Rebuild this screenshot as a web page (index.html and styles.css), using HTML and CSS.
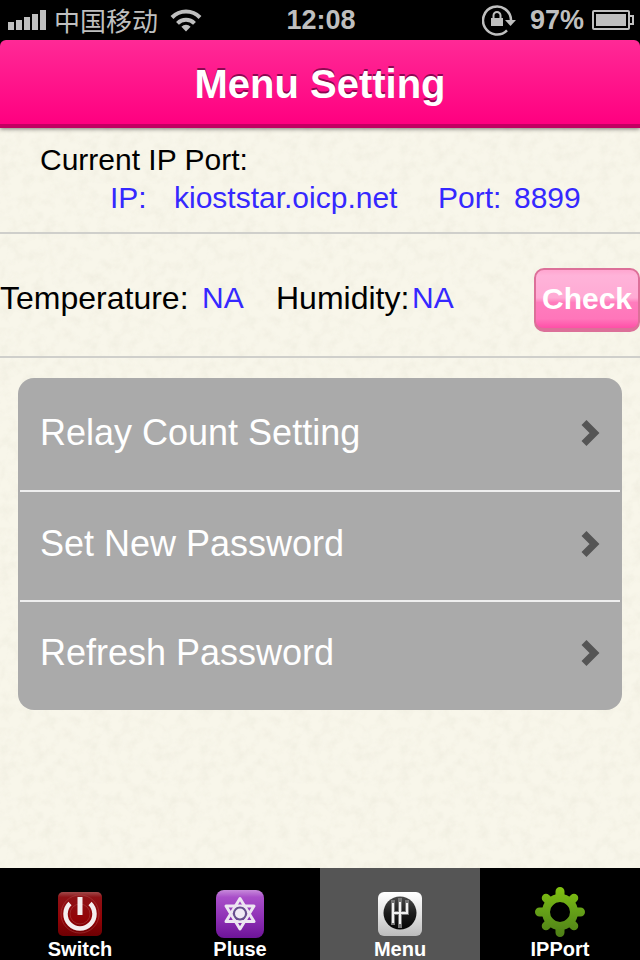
FILE: index.html
```html
<!DOCTYPE html>
<html lang="en">
<head>
  <meta charset="UTF-8" />
  <meta name="viewport" content="width=device-width, initial-scale=1.0" />
  <title>Menu Setting</title>
  <link rel="stylesheet" href="styles.css">
</head>
<body>
  <div class="status-bar">
    <div class="status-left">
      <svg class="signal" width="38" height="20" viewBox="0 0 38 20" fill="currentColor" aria-hidden="true">
        <path d="M0 12h6v8H0zM8 10h6v10H8zM16 7h6v13h-6zM24 4h6v16h-6zM32 0h6v20h-6z"/>
      </svg>
      <span class="carrier" lang="zh-CN">中国移动</span>
      <svg class="wifi" width="32" height="24" viewBox="0 0 32 24" aria-hidden="true">
        <g fill="none" stroke="currentColor" stroke-width="4">
          <path d="M2 9.500a19.500 19.500 0 0 1 28 0"/>
          <path d="M7.500 15.300a12 12 0 0 1 17 0"/>
        </g>
        <path d="M16 23.500l-4.600-4.800a6.500 6.500 0 0 1 9.200 0z" fill="currentColor"/>
      </svg>
    </div>
    <time class="clock">12:08</time>
    <div class="status-right">
      <svg class="lock" width="34" height="32" viewBox="0 0 34 32" aria-hidden="true">
        <path d="M25 26.300A14 14 0 1 1 29 16" fill="none" stroke="currentColor" stroke-width="2.500"/>
        <path d="M23 16h11l-5.500 6z" fill="currentColor"/>
        <rect x="9" y="14" width="12" height="8" fill="currentColor"/>
        <path d="M11.500 14v-2.500a3.500 3.500 0 0 1 7 0V14" fill="none" stroke="currentColor" stroke-width="2"/>
      </svg>
      <span>97%</span>
      <svg class="battery" width="42" height="20" viewBox="0 0 42 20" aria-hidden="true">
        <rect x="1" y="1" width="36" height="18" rx="1" fill="none" stroke="currentColor" stroke-width="2"/>
        <path d="M38 6h3v8h-3" fill="none" stroke="currentColor" stroke-width="2"/>
        <rect x="4" y="4" width="30" height="12" fill="currentColor"/>
      </svg>
    </div>
  </div>

  <header class="title-bar">
    <h1>Menu Setting</h1>
  </header>

  <main>
    <section class="address">
      <h2>Current IP Port:</h2>
      <div class="address-row">
        <span>IP:</span>
        <span>kioststar.oicp.net</span>
        <span>Port:</span>
        <span>8899</span>
      </div>
    </section>

    <section class="sensors">
      <span>Temperature:</span>
      <span class="value">NA</span>
      <span>Humidity:</span>
      <span class="value">NA</span>
      <button class="check-btn" type="button">Check</button>
    </section>

    <ul class="menu">
      <li>
        <a href="#relay">Relay Count Setting
          <svg width="19" height="28" viewBox="0 0 19 28" aria-hidden="true"><path d="M3 3.500L13.500 14 3 24.500" /></svg>
        </a>
      </li>
      <li>
        <a href="#new-password">Set New Password
          <svg width="19" height="28" viewBox="0 0 19 28" aria-hidden="true"><path d="M3 3.500L13.500 14 3 24.500" /></svg>
        </a>
      </li>
      <li>
        <a href="#refresh">Refresh Password
          <svg width="19" height="28" viewBox="0 0 19 28" aria-hidden="true"><path d="M3 3.500L13.500 14 3 24.500" /></svg>
        </a>
      </li>
    </ul>
  </main>

  <nav class="tabs">
    <a href="#switch">
      <svg width="48" height="48" viewBox="0 0 48 48" aria-hidden="true">
        <defs>
          <linearGradient id="red" x2="0" y2="1">
            <stop offset="0" stop-color="#a04a4a"/>
            <stop offset=".12" stop-color="#8e1216"/>
            <stop offset=".6" stop-color="#930306"/>
            <stop offset="1" stop-color="#6e0003"/>
          </linearGradient>
        </defs>
        <rect x="2" y="2" width="44" height="44" rx="5" fill="url(#red)"/>
        <circle cx="24" cy="24" r="19" fill="none" stroke="#b04a4a" stroke-opacity=".5"/>
        <circle cx="24" cy="24" r="10" fill="none" stroke="#b04a4a" stroke-opacity=".5"/>
        <path d="M14 13.500a14.500 14.500 0 1 0 20 0" fill="none" stroke="#f4eeee" stroke-width="4.500"/>
        <path d="M24 7v18" stroke="#f4eeee" stroke-width="5"/>
      </svg>
      Switch
    </a>
    <a href="#pluse">
      <svg width="48" height="48" viewBox="0 0 48 48" aria-hidden="true">
        <defs>
          <linearGradient id="purple" x2="0" y2="1">
            <stop offset="0" stop-color="#c78adb"/>
            <stop offset=".15" stop-color="#a94fc9"/>
            <stop offset=".6" stop-color="#8d2fb4"/>
            <stop offset="1" stop-color="#6e1498"/>
          </linearGradient>
        </defs>
        <rect x="0" y="0" width="48" height="48" rx="8" fill="url(#purple)"/>
        <g fill="none" stroke="#ece6f1" stroke-width="3" stroke-linejoin="round">
          <path d="M24 8.500L38 31.500H10z"/>
          <path d="M24 39L10 16h28z"/>
        </g>
        <circle cx="24" cy="23.500" r="6" fill="#f0eaf5" stroke="#66518c" stroke-width="2"/>
      </svg>
      Pluse
    </a>
    <a href="#menu" class="active" aria-current="page">
      <svg width="48" height="48" viewBox="0 0 48 48" aria-hidden="true">
        <defs>
          <linearGradient id="silver" x2="0" y2="1">
            <stop offset="0" stop-color="#fff"/>
            <stop offset=".5" stop-color="#e3e3e3"/>
            <stop offset="1" stop-color="#bcbcbc"/>
          </linearGradient>
          <linearGradient id="knob" x2="0" y2="1">
            <stop offset="0" stop-color="#4a4a4a"/>
            <stop offset=".5" stop-color="#1c1c1c"/>
            <stop offset="1" stop-color="#050505"/>
          </linearGradient>
        </defs>
        <rect x="2" y="2" width="44" height="44" rx="6" fill="url(#silver)"/>
        <circle cx="24" cy="23" r="16.500" fill="url(#knob)"/>
        <path d="M17 10v25M24 8v30M31 10v15M17 23h14" fill="none" stroke="#777" stroke-width="4"/>
        <path d="M17 13v20M24 12v22M31 13v10M16 23h16" fill="none" stroke="#f2f2f2" stroke-width="2"/>
      </svg>
      Menu
    </a>
    <a href="#ipport">
      <svg width="52" height="52" viewBox="0 0 52 52" aria-hidden="true">
        <defs>
          <linearGradient id="green" gradientUnits="userSpaceOnUse" x1="0" y1="0" x2="0" y2="52">
            <stop offset="0" stop-color="#83c410"/>
            <stop offset=".5" stop-color="#649f18"/>
            <stop offset="1" stop-color="#4d7d17"/>
          </linearGradient>
        </defs>
        <circle cx="26" cy="26" r="14" fill="none" stroke="url(#green)" stroke-width="8"/>
        <g fill="none" stroke="url(#green)" stroke-width="9" stroke-linecap="round">
          <path d="M26.010 5.500L26 10M26.010 42L26 46.500M5.500 26.010L10 26M42 26.010L46.500 26"/>
          <path d="M12 12l4 4M40 12l-4 4M12 40l4-4M40 40l-4-4" stroke-width="8.500"/>
        </g>
      </svg>
      IPPort
    </a>
  </nav>
</body>
</html>
```
FILE: styles.css
```css
:root {
  --paper: #f8f6ea;
  --pink: #ff0080;
  --blue: #3528ff;
  --grey: #aaa;
  --status: #bfbfbf;
}

* {
  box-sizing: border-box;
}

body {
  margin: 0;
  min-height: 100vh;
  display: flex;
  flex-direction: column;
  background: #000;
  font-family: "Liberation Sans", Arial, sans-serif;
}

h1, h2, ul {
  margin: 0;
  padding: 0;
}

a {
  color: inherit;
  text-decoration: none;
}

/* status bar */
.status-bar {
  display: grid;
  grid-template-columns: 1fr auto 1fr;
  align-items: center;
  height: 40px;
  padding: 0 6px 0 8px;
  color: var(--status);
  font-size: 27px;
  font-weight: bold;
}

.status-left,
.status-right {
  display: flex;
  align-items: center;
}

.status-right {
  justify-content: flex-end;
  gap: 8px;
}

.carrier {
  margin: 0 12px 0 8px;
  font-family: "Noto Sans CJK SC", sans-serif;
  font-size: 26px;
  font-weight: 400;
  line-height: 38px;
}

.status-right .lock {
  margin-right: 6px;
}

/* title */
.title-bar {
  position: relative;
  height: 88px;
  border-bottom: 4px solid #c20062;
  border-radius: 6px 6px 0 0;
  background: linear-gradient(#ff2a96, var(--pink));
  box-shadow: 0 1px 4px rgba(0, 0, 0, 0.5);
  color: #fff;
  text-align: center;
}

.title-bar h1 {
  font-size: 40px;
  line-height: 88px;
  text-shadow: 0 -2px 0 rgba(60, 0, 40, 0.6);
}

/* content */
main {
  flex: 1;
  background-color: var(--paper);
  background-image: url("data:image/svg+xml,%3Csvg xmlns='http://www.w3.org/2000/svg' width='200' height='200'%3E%3Cfilter id='n' x='0' y='0' width='1' height='1'%3E%3CfeTurbulence type='fractalNoise' baseFrequency='.09' numOctaves='3' stitchTiles='stitch'/%3E%3CfeColorMatrix values='0 0 0 0 .75 0 0 0 0 .73 0 0 0 0 .62 1.2 0 0 0 -.5'/%3E%3C/filter%3E%3Crect width='200' height='200' filter='url(%23n)' opacity='.5'/%3E%3C/svg%3E");
}

.address,
.sensors {
  border-bottom: 2px solid #cfcfcb;
}

.address {
  padding: 13px 40px 15px;
  font-size: 30px;
  line-height: 38px;
}

.address h2 {
  font-size: 30px;
  font-weight: normal;
}

.address-row {
  display: grid;
  grid-template-columns: 64px 264px 76px auto;
  padding-left: 70px;
  color: var(--blue);
}

.sensors {
  display: grid;
  grid-template-columns: 202px 74px 136px 1fr auto;
  padding: 34px 0 24px;
  font-size: 32px;
  line-height: 60px;
}

.sensors .value {
  color: var(--blue);
  font-size: 30px;
}

.check-btn {
  width: 106px;
  height: 64px;
  padding: 0;
  border: 2px solid #dc7099;
  border-bottom-width: 4px;
  border-radius: 10px;
  background: linear-gradient(#ffa6d0, #ffb3d9 10%, #ffaad4 48%, #ff7cbd 56%, #ff76ba 84%, #ff4fa8);
  color: #fff;
  font: bold 30px "Liberation Sans", Arial, sans-serif;
  cursor: pointer;
}

/* menu list */
.menu {
  margin: 20px 18px;
  padding: 2px;
  border-radius: 16px;
  background: var(--grey);
  list-style: none;
}

.menu li + li {
  border-top: 2px solid #eee;
}

.menu a {
  display: flex;
  align-items: center;
  justify-content: space-between;
  height: 108px;
  padding: 0 20px 4px;
  color: #fff;
  font-size: 36px;
}

.menu li:first-child a {
  height: 110px;
}

.menu li:last-child a {
  height: 106px;
}

.menu svg {
  fill: none;
  stroke: #555;
  stroke-width: 7;
}

/* bottom tabs */
.tabs {
  display: grid;
  grid-template-columns: repeat(4, 1fr);
  height: 92px;
  background: #000;
  color: #fff;
  font-size: 20px;
  font-weight: bold;
  line-height: 22px;
}

.tabs a {
  display: flex;
  flex-direction: column;
  align-items: center;
  justify-content: flex-end;
}

.tabs .active {
  background: #555;
}
```
